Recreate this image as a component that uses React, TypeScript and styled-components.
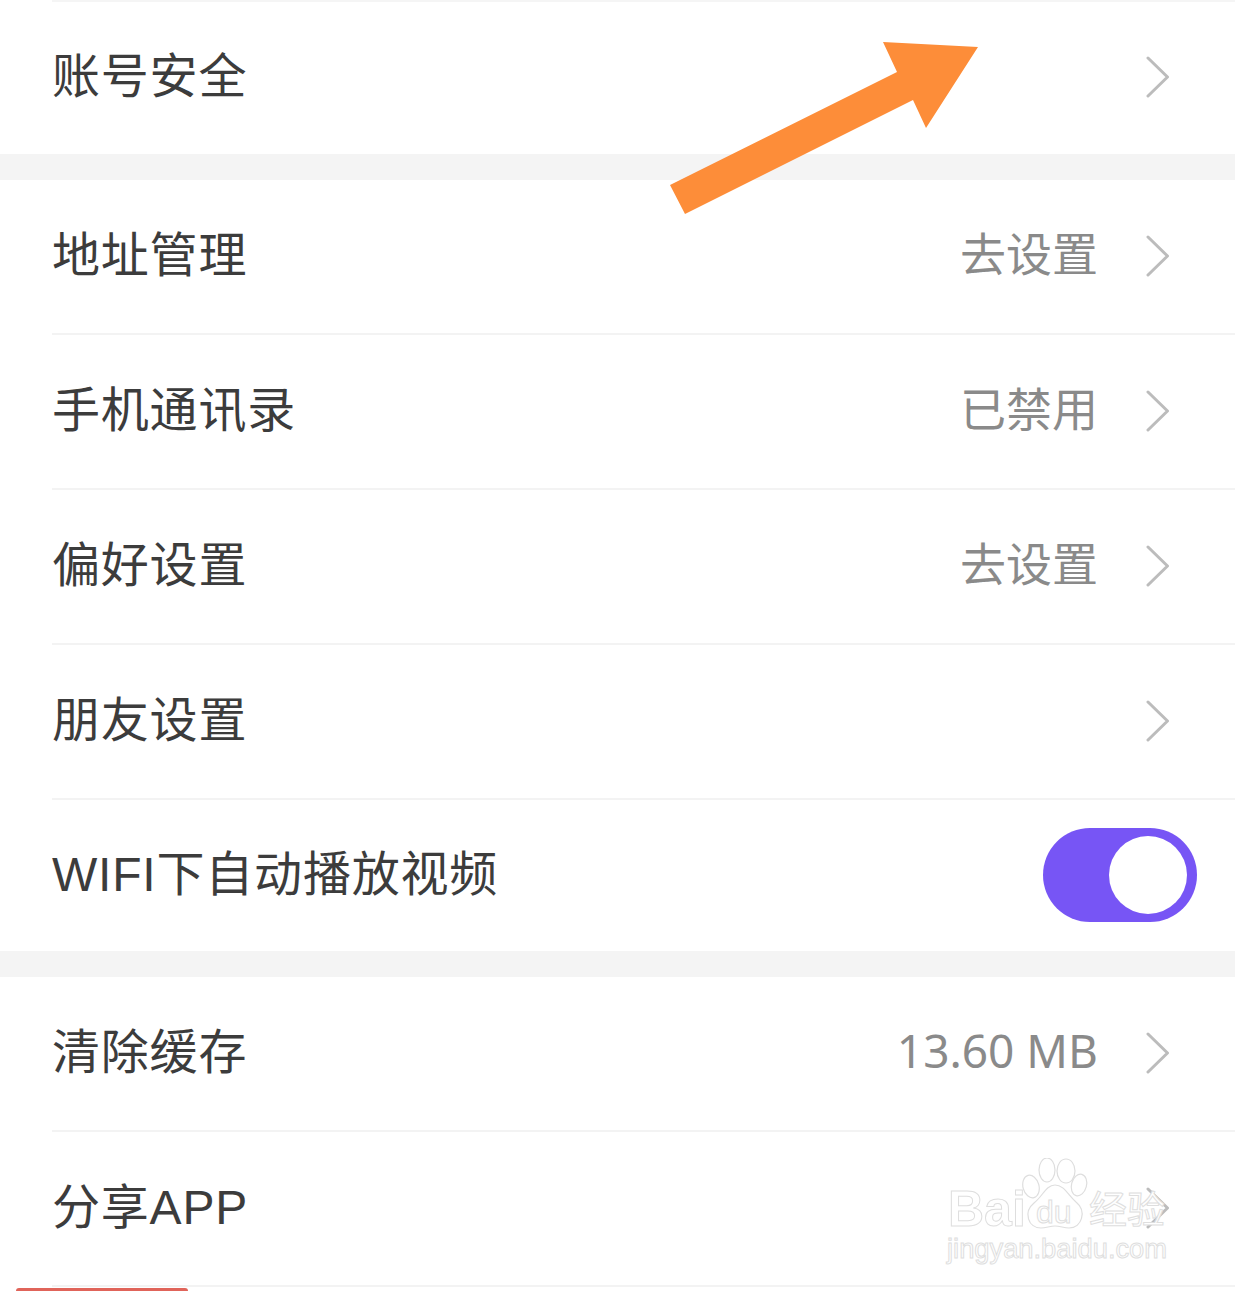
import styled, { createGlobalStyle } from 'styled-components';

const GlobalStyle = createGlobalStyle`
  html, body {
    margin: 0;
    padding: 0;
    background: #fff;
    font-family: "Noto Sans", "Noto Sans CJK SC", sans-serif;
  }
`;

const Page = styled.div`
  position: relative;
  width: 1235px;
  height: 1291px;
  overflow: hidden;
  background: #fff;
`;

const Section = styled.section`
  display: flex;
  flex-direction: column;
`;

const Gap = styled.div`
  height: 26px;
  background: #f4f4f4;
`;

const Row = styled.div<{ $height: number; $line?: 'top' | 'bottom' }>`
  box-sizing: border-box;
  height: ${(p) => p.$height}px;
  margin-left: 52px;
  padding-right: 65px;
  display: flex;
  align-items: center;
  ${(p) => p.$line === 'top' && 'border-top: 2px solid #f5f5f5;'}
  ${(p) => p.$line === 'bottom' && 'border-bottom: 2px solid #f3f3f3;'}
`;

const Label = styled.span`
  flex: 1;
  font-family: "Liberation Sans", "Noto Sans CJK SC", sans-serif;
  font-size: 48px;
  line-height: 60px;
  letter-spacing: 0.8px;
  color: #3c3c3c;
  margin-bottom: 2px;
`;

const Value = styled.span`
  font-size: 46px;
  line-height: 60px;
  color: #8a8a8a;
  margin-right: 48px;
  margin-bottom: 7px;
`;

const ChevronIcon = styled.svg`
  width: 24px;
  height: 42px;
  flex: none;
  margin-bottom: 2px;
  fill: none;
  stroke: #bcbcbc;
  stroke-width: 3;
  stroke-linecap: round;
  stroke-linejoin: round;
`;

const Toggle = styled.div`
  box-sizing: border-box;
  width: 154px;
  height: 94px;
  margin-right: -27px;
  margin-bottom: 1px;
  padding: 8px 10px;
  border-radius: 47px;
  background: #7755f5;
  display: flex;
  justify-content: flex-end;
`;

const Knob = styled.div`
  width: 78px;
  height: 78px;
  border-radius: 50%;
  background: #fff;
`;

const ArrowMark = styled.svg`
  position: absolute;
  left: 660px;
  top: 30px;
  width: 330px;
  height: 195px;
`;

const Watermark = styled.div`
  position: absolute;
  left: 946px;
  top: 1158px;
  width: 224px;
  height: 108px;
`;

const WatermarkText = styled.span<{ $size: number; $left: number; $top: number; $bold?: boolean }>`
  position: absolute;
  left: ${(p) => p.$left}px;
  top: ${(p) => p.$top}px;
  font-family: "Liberation Sans", "Noto Sans CJK SC", sans-serif;
  font-size: ${(p) => p.$size}px;
  font-weight: ${(p) => (p.$bold ? 700 : 400)};
  line-height: 0.8;
  white-space: nowrap;
  color: #fff;
  -webkit-text-stroke: 1px #dedede;
`;

const Paw = styled.svg`
  position: absolute;
  left: 76px;
  top: 0;
  width: 68px;
  height: 72px;
  fill: #fff;
  stroke: #dedede;
  stroke-width: 1.2;
`;

const BottomTab = styled.div`
  position: absolute;
  left: 16px;
  bottom: 0;
  width: 172px;
  height: 3px;
  border-radius: 3px 3px 0 0;
  background: #e0645a;
`;

const Chevron = () => (
  <ChevronIcon viewBox="0 0 24 42">
    <path d="M2 2 L21.5 21 L2 40" />
  </ChevronIcon>
);

type Item = { label: string; value?: string };

const ListRow = ({ label, value, height, line }: Item & { height: number; line?: 'top' | 'bottom' }) => (
  <Row $height={height} $line={line}>
    <Label>{label}</Label>
    {value && <Value>{value}</Value>}
    <Chevron />
  </Row>
);

const settings: Item[] = [
  { label: '地址管理', value: '去设置' },
  { label: '手机通讯录', value: '已禁用' },
  { label: '偏好设置', value: '去设置' },
  { label: '朋友设置' },
];

export default function App() {
  return (
    <Page>
      <GlobalStyle />
      <Section>
        <ListRow label="账号安全" height={154} line="top" />
      </Section>
      <Gap />
      <Section>
        {settings.map((item) => (
          <ListRow key={item.label} {...item} height={155} line="bottom" />
        ))}
        <Row $height={151}>
          <Label>WIFI下自动播放视频</Label>
          <Toggle>
            <Knob />
          </Toggle>
        </Row>
      </Section>
      <Gap />
      <Section>
        <ListRow label="清除缓存" value="13.60 MB" height={155} line="bottom" />
        <ListRow label="分享APP" height={155} line="bottom" />
      </Section>
      <BottomTab />
      <ArrowMark viewBox="660 30 330 195">
        <polygon
          points="883,42 978,47 926,128 913,100 685,214 670,185 897,72"
          fill="#fd8d39"
        />
      </ArrowMark>
      <Watermark>
        <WatermarkText $size={50} $left={2} $top={31} $bold>Bai</WatermarkText>
        <Paw viewBox="0 0 68 72">
          <ellipse cx="9" cy="28.5" rx="8" ry="11.5" transform="rotate(-15 9 28.5)" />
          <ellipse cx="25" cy="12" rx="8" ry="12" />
          <ellipse cx="44" cy="13" rx="9" ry="12" />
          <ellipse cx="57" cy="27" rx="7.5" ry="11" transform="rotate(15 57 27)" />
          <path d="M33 27 C42 27 46 37 54 44 C65 53 60 70 47 70 C42 70 38 68 33 68 C28 68 24 70 19 70 C6 70 1 54 12 45 C21 38 24 27 33 27 Z" />
        </Paw>
        <WatermarkText $size={32} $left={90} $top={42}>du</WatermarkText>
        <WatermarkText $size={38} $left={143} $top={37}>经验</WatermarkText>
        <WatermarkText $size={27.3} $left={1} $top={80}>jingyan.baidu.com</WatermarkText>
      </Watermark>
    </Page>
  );
}
